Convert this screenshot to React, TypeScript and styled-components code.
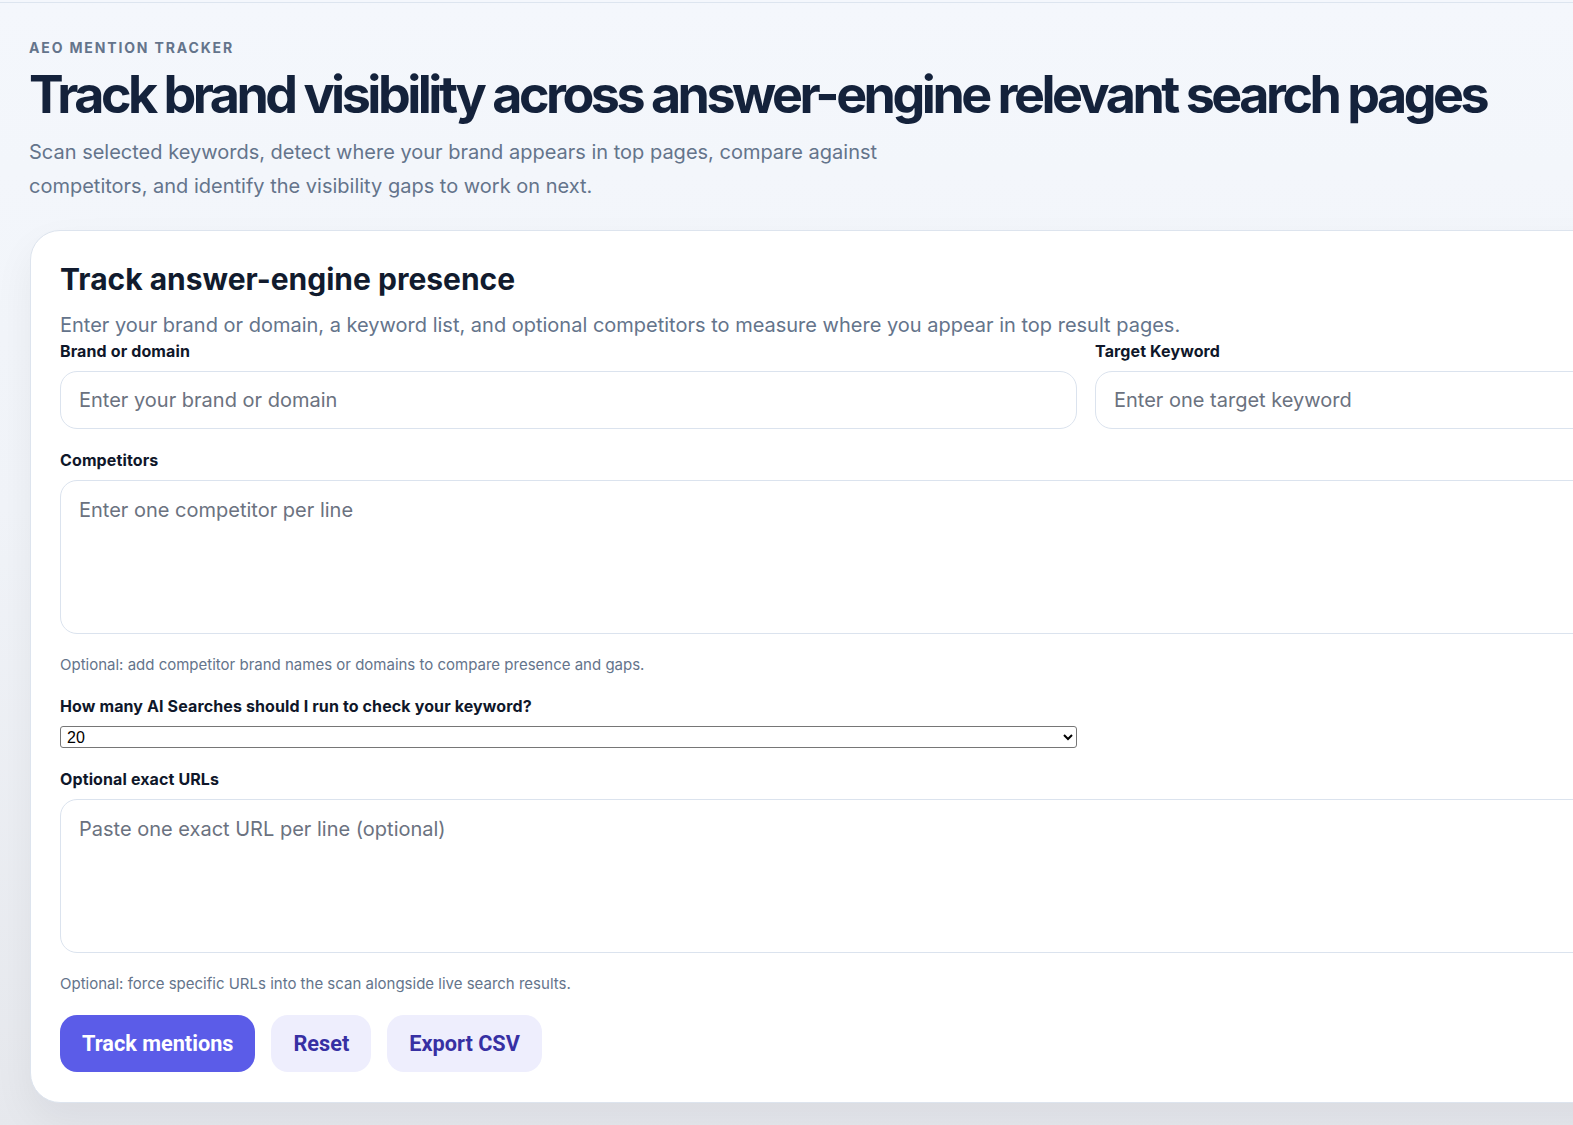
import React from "react";
import styled, { createGlobalStyle } from "styled-components";

const GlobalStyle = createGlobalStyle`
  html, body {
    margin: 0;
    padding: 0;
    overflow: hidden;
  }
  body {
    font-family: Inter, "Noto Sans", sans-serif;
    background: #eef1f6;
  }
  * { box-sizing: border-box; }
`;

const Page = styled.div`
  min-height: 1125px;
  width: 100%;
  overflow: hidden;
  padding-top: 2px;
  background: linear-gradient(180deg, #f4f7fc 0%, #f1f4f9 45%, #e6e8ed 100%);
`;

const Shell = styled.div`
  border-top: 1px solid #dde5ef;
  padding: 36px 0 27px 29px;
`;

const Header = styled.header`
  display: flex;
  flex-direction: column;
`;

const Eyebrow = styled.div`
  font-size: 14px;
  line-height: 18px;
  font-weight: 700;
  letter-spacing: 1.85px;
  color: #64748b;
  text-transform: uppercase;
`;

const Title = styled.h1`
  margin: 7px 0 0;
  font-size: 52px;
  line-height: 62px;
  font-weight: 700;
  letter-spacing: -3.5px;
  color: #14223b;
  white-space: nowrap;
`;

const Lead = styled.p`
  margin: 9px 0 0;
  max-width: 880px;
  font-size: 20px;
  line-height: 34px;
  color: #64748b;
`;

const Card = styled.section`
  margin-top: 27px;
  margin-left: 1px;
  width: 2112px;
  background: #ffffff;
  border: 1px solid #dde4ee;
  border-radius: 30px;
  padding: 29px 29px 30px 29px;
  box-shadow: 0 18px 40px rgba(15, 23, 42, 0.06);
  display: flex;
  flex-direction: column;
`;

const CardTitle = styled.h2`
  margin: 0;
  font-size: 30px;
  line-height: 38px;
  font-weight: 700;
  color: #111b2e;
`;

const CardText = styled.p`
  margin: 13px 0 0;
  font-size: 20px;
  line-height: 28px;
  color: #64748b;
`;

const Grid = styled.div`
  display: grid;
  grid-template-columns: 1fr 1fr;
  column-gap: 18px;
  margin-top: 2px;
`;

const Field = styled.div<{ $top?: number }>`
  display: flex;
  flex-direction: column;
  margin-top: ${(p) => p.$top ?? 0}px;
`;

const Label = styled.label`
  font-size: 16px;
  line-height: 20px;
  font-weight: 700;
  letter-spacing: 0.12px;
  color: #0f172a;
  margin-bottom: 10px;
`;

const TextInput = styled.input`
  height: 58px;
  width: 100%;
  border: 1px solid #dbe3ee;
  border-radius: 17px;
  padding: 0 18px;
  font-family: Inter, sans-serif;
  font-size: 20px;
  color: #0f172a;
  background: #ffffff;
  outline: none;
  &::placeholder { color: #6b7280; }
`;

const TextArea = styled.textarea`
  display: block;
  height: 154px;
  width: 100%;
  border: 1px solid #dbe3ee;
  border-radius: 17px;
  padding: 15px 18px;
  font-family: Inter, sans-serif;
  font-size: 20px;
  line-height: 28px;
  color: #0f172a;
  resize: none;
  outline: none;
  background: #ffffff;
  &::placeholder { color: #6b7280; }
`;

const Help = styled.div`
  margin-top: 21px;
  font-size: 15px;
  line-height: 20px;
  color: #64748b;
`;

const Select = styled.select`
  width: 1017px;
  height: 22px;
  font-family: "Liberation Sans", Arial, sans-serif;
  font-size: 16px;
  color: #000;
  border: 1px solid #767676;
  border-radius: 3px;
  background: #fff;
  padding: 0 2px;
`;

const Actions = styled.div`
  display: flex;
  gap: 16px;
  margin-top: 21px;
`;

const Button = styled.button<{ $primary?: boolean }>`
  height: 57px;
  padding: 0 22px;
  border: none;
  border-radius: 17px;
  font-family: Roboto, Inter, sans-serif;
  font-size: 21.7px;
  font-weight: 700;
  background: ${(p) => (p.$primary ? "#5b5ce8" : "#eeeefd")};
  color: ${(p) => (p.$primary ? "#ffffff" : "#3730a3")};
  cursor: pointer;
`;

export default function App() {
  return (
    <>
      <GlobalStyle />
      <Page>
        <Shell>
          <Header>
            <Eyebrow>AEO Mention Tracker</Eyebrow>
            <Title>Track brand visibility across answer-engine relevant search pages</Title>
            <Lead>
              Scan selected keywords, detect where your brand appears in top pages, compare against
              competitors, and identify the visibility gaps to work on next.
            </Lead>
          </Header>
          <Card>
            <CardTitle>Track answer-engine presence</CardTitle>
            <CardText>
              Enter your brand or domain, a keyword list, and optional competitors to measure where you appear in top result pages.
            </CardText>
            <Grid>
              <Field>
                <Label>Brand or domain</Label>
                <TextInput placeholder="Enter your brand or domain" />
              </Field>
              <Field>
                <Label>Target Keyword</Label>
                <TextInput placeholder="Enter one target keyword" />
              </Field>
            </Grid>
            <Field $top={21}>
              <Label>Competitors</Label>
              <TextArea placeholder="Enter one competitor per line" />
            </Field>
            <Help>Optional: add competitor brand names or domains to compare presence and gaps.</Help>
            <Field $top={21}>
              <Label>How many AI Searches should I run to check your keyword?</Label>
              <Select defaultValue="20">
                <option value="5">5</option>
                <option value="10">10</option>
                <option value="20">20</option>
                <option value="50">50</option>
              </Select>
            </Field>
            <Field $top={21}>
              <Label>Optional exact URLs</Label>
              <TextArea placeholder="Paste one exact URL per line (optional)" />
            </Field>
            <Help>Optional: force specific URLs into the scan alongside live search results.</Help>
            <Actions>
              <Button $primary>Track mentions</Button>
              <Button>Reset</Button>
              <Button>Export CSV</Button>
            </Actions>
          </Card>
        </Shell>
      </Page>
    </>
  );
}
